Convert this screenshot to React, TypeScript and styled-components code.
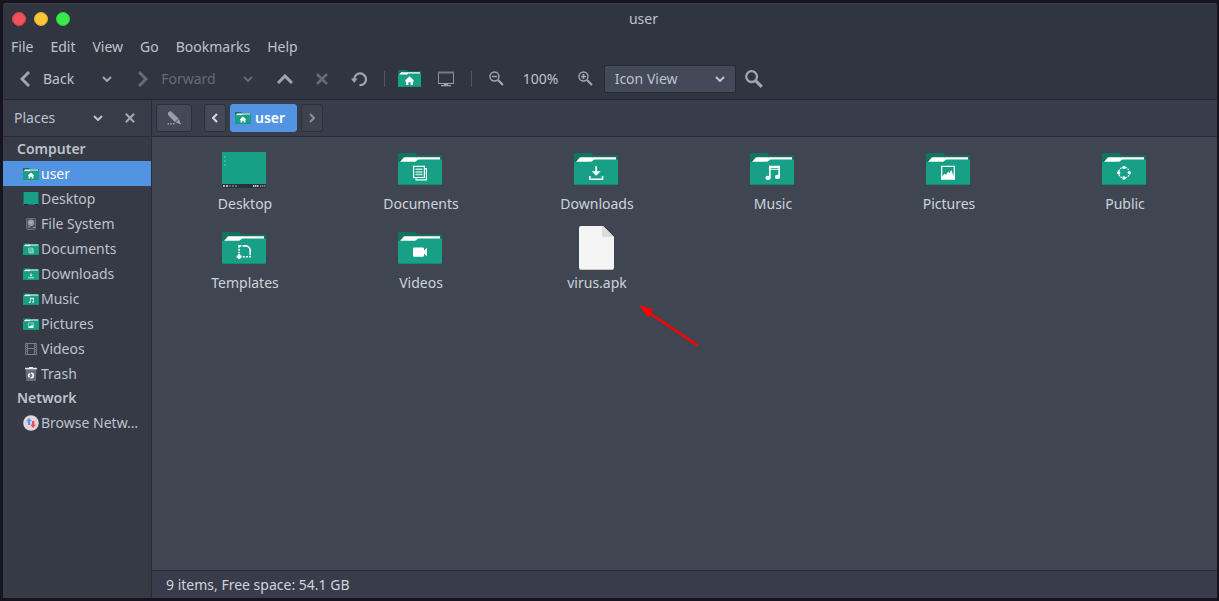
import React from 'react';
import styled, { createGlobalStyle, css } from 'styled-components';

const GlobalStyle = createGlobalStyle`
  *, *::before, *::after { box-sizing: border-box; }
  html, body, #root { height: 100%; }
  body {
    margin: 0;
    background: #17141f;
    color: #bcc3ce;
    font: 14px/20px "Noto Sans", "Open Sans", sans-serif;
  }
  button, select { font: inherit; color: inherit; }
  svg { display: block; flex: none; }
`;

const Desktop = styled.div`
  min-height: 100%;
  display: flex;
  padding: 3px 2px 3px 3px;
`;

const Window = styled.div`
  flex: 1;
  min-width: 0;
  display: flex;
  flex-direction: column;
  border-radius: 3px 3px 0 0;
  overflow: hidden;
  background: #404651;
`;

const Header = styled.header`
  background: #31353f;
  border-bottom: 1px solid #23262e;
  border-top: 1px solid #3a3e49;
`;

const TitleBar = styled.div`
  display: flex;
  align-items: center;
  height: 29px;
  padding-left: 9px;
`;

const WindowButtons = styled.div`
  display: flex;
  gap: 8px;
`;

const WindowButton = styled.button<{ $color: string; $edge: string }>`
  width: 14px;
  height: 14px;
  padding: 0;
  border: 1px solid ${(p) => p.$edge};
  border-radius: 50%;
  background: ${(p) => p.$color};
`;

const Title = styled.h1`
  flex: 1;
  margin: 0;
  font-size: 14px;
  font-weight: 400;
  text-align: center;
`;

const MenuBar = styled.nav`
  display: flex;
  gap: 1px;
  height: 28px;
`;

const MenuButton = styled.button`
  padding: 0 8px;
  border: 0;
  background: none;
`;

const ToolBar = styled.div`
  display: flex;
  align-items: center;
  height: 38px;
  padding: 0 4px 3px;
`;

const ToolButton = styled.button<{ $labelled?: boolean }>`
  display: flex;
  align-items: center;
  justify-content: center;
  gap: 13px;
  height: 28px;
  border: 0;
  background: none;
  color: #a0a5b0;
  ${(p) => (p.$labelled ? css`padding: 0 14px 0 13px;` : css`width: 37px; padding: 0;`)}
  span { color: #bcc3ce; }
  &:disabled, &:disabled span { color: #666b77; }
`;

const Separator = styled.div`
  width: 1px;
  height: 16px;
  margin: 0 6px;
  background: #4f545f;
`;

const ZoomLevel = styled.output`
  width: 52px;
  text-align: center;
`;

const SelectBox = styled.div`
  position: relative;
  svg {
    position: absolute;
    right: 11px;
    top: 11px;
    pointer-events: none;
  }
`;

const Select = styled.select`
  display: block;
  appearance: none;
  width: 132px;
  height: 28px;
  padding: 0 28px 0 10px;
  border: 1px solid #262a33;
  border-radius: 2px;
  background: #434959;
`;

const Body = styled.div`
  flex: 1;
  display: flex;
`;

const Sidebar = styled.aside`
  width: 149px;
  flex: none;
  background: #363a45;
  border-right: 1px solid #2a2d38;
`;

const SidebarHeader = styled.div`
  display: flex;
  align-items: center;
  height: 37px;
  padding: 0 10px 0 11px;
  border-bottom: 1px solid #2a2d38;
  background: #383b48;
`;

const PlacesButton = styled.button`
  flex: 1;
  display: flex;
  align-items: center;
  justify-content: space-between;
  padding: 0 16px 0 0;
  border: 0;
  background: none;
`;

const IconButton = styled.button`
  display: grid;
  place-items: center;
  width: 22px;
  height: 22px;
  padding: 0;
  border: 0;
  background: none;
  color: #a0a5b0;
`;

const GroupTitle = styled.h2`
  height: 24px;
  margin: 0;
  padding-left: 14px;
  font-size: 14px;
  line-height: 24px;
  font-weight: 600;
`;

const PlaceList = styled.ul`
  margin: 0;
  padding: 0;
  list-style: none;
`;

const Place = styled.a<{ $active?: boolean }>`
  display: flex;
  align-items: center;
  gap: 2px;
  height: 25px;
  padding: 0 8px 0 20px;
  color: ${(p) => (p.$active ? '#ffffff' : '#bcc3ce')};
  background: ${(p) => (p.$active ? '#5294e2' : 'transparent')};
  text-decoration: none;
  span {
    overflow: hidden;
    text-overflow: ellipsis;
    white-space: nowrap;
  }
`;

const Main = styled.main`
  flex: 1;
  min-width: 0;
  display: flex;
  flex-direction: column;
`;

const PathBar = styled.div`
  display: flex;
  align-items: center;
  gap: 4px;
  height: 37px;
  padding: 0 4px;
  border-bottom: 1px solid #2a2d38;
  background: #393c4a;
`;

const PathButton = styled.button<{ $active?: boolean; $wide?: boolean }>`
  display: flex;
  align-items: center;
  justify-content: center;
  gap: 4px;
  height: 28px;
  min-width: ${(p) => (p.$wide ? 36 : 22)}px;
  margin-right: ${(p) => (p.$wide ? 8 : 0)}px;
  padding: 0 ${(p) => (p.$active ? 11 : 0)}px 0 ${(p) => (p.$active ? 4 : 0)}px;
  border: 1px solid ${(p) => (p.$active ? '#5294e2' : '#2c303b')};
  border-radius: 3px;
  background: ${(p) => (p.$active ? '#5294e2' : '#444857')};
  color: ${(p) => (p.$active ? '#ffffff' : '#d3dae3')};
  font-weight: ${(p) => (p.$active ? 600 : 400)};
  &:disabled { background: #3e424f; color: #8a8f9b; }
`;

const FileGrid = styled.ul`
  flex: 1;
  display: grid;
  grid-template-columns: repeat(auto-fill, minmax(160px, 1fr));
  grid-auto-rows: 79px;
  align-content: start;
  margin: 0;
  padding: 8px 5px 0 4px;
  list-style: none;
`;

const FileItem = styled.li`
  position: relative;
  display: flex;
  flex-direction: column;
  align-items: center;
  gap: 1px;
  text-align: center;
`;

const FileIcon = styled.div`
  display: grid;
  place-items: center;
  height: 48px;
`;

const FileName = styled.span`
  padding-left: 2px;
  color: #cdd3dc;
`;

const Pointer = styled.svg`
  position: absolute;
  left: calc(50% + 43px);
  top: 81px;
`;

const StatusBar = styled.footer`
  height: 28px;
  padding: 0 14px;
  border-top: 1px solid #2a2d38;
  background: #393c4a;
  line-height: 27px;
  color: #cdd3dc;
`;

type Dir = 'left' | 'right' | 'up' | 'down';
const chevrons: Record<Dir, string> = {
  left: 'M9 1 2 8l7 7',
  right: 'M1 1l7 7-7 7',
  up: 'M1 9l7-7 7 7',
  down: 'M1 1l4 4 4-4',
};

const Chevron = ({ dir }: { dir: Dir }) => {
  const w = dir === 'up' ? 16 : 10;
  const h = dir === 'up' ? 10 : dir === 'down' ? 6 : 16;
  return (
    <svg width={w} height={h} viewBox={`0 0 ${w} ${h}`} fill="none" stroke="currentColor" strokeWidth={dir === 'down' ? 2 : 3} aria-hidden>
      <path d={chevrons[dir]} />
    </svg>
  );
};

const SmallChevron = ({ flip }: { flip?: boolean }) => (
  <svg width="6" height="10" viewBox="0 0 6 10" fill="none" stroke="currentColor" strokeWidth="2" aria-hidden>
    <path d={flip ? 'M1 1l4 4-4 4' : 'M5 1 1 5l4 4'} />
  </svg>
);

const Cross = ({ size }: { size: number }) => (
  <svg width={size} height={size} viewBox="0 0 12 12" fill="none" stroke="currentColor" strokeWidth="2.6" aria-hidden>
    <path d="M1 1l10 10M11 1 1 11" />
  </svg>
);

const Reload = () => (
  <svg width="16" height="16" viewBox="0 0 16 16" aria-hidden>
    <path d="M8.5 14.2h.8A5.9 5.9 0 1 0 3.2 8" fill="none" stroke="currentColor" strokeWidth="2.2" />
    <path d="M0 7.4h6.6L3.2 12z" fill="currentColor" />
  </svg>
);

const Monitor = () => (
  <svg width="16" height="16" viewBox="0 0 16 16" aria-hidden>
    <path d="M.5 1v11.5h15V1" fill="#31353f" stroke="#8795a3" />
    <path d="M0 .5h16v2H0z" fill="#747b87" />
    <path d="M0 12h16v1H0zM6 13h4v1H6zM3 14h10v1.2H3z" fill="#98a5b1" />
  </svg>
);

const Magnifier = ({ sign }: { sign?: 'plus' | 'minus' }) => {
  const size = sign ? 15 : 18;
  return (
    <svg width={size} height={size} viewBox="0 0 15 15" fill="none" stroke="currentColor" aria-hidden>
      <circle cx="5.5" cy="5.5" r="4.5" strokeWidth={sign ? 1.4 : 1.9} />
      <path d="M9 9l5 5" strokeWidth={sign ? 2.2 : 2.6} />
      {sign && <path d="M3 5.5h5" strokeWidth="1.6" />}
      {sign === 'plus' && <path d="M5.5 3v5" strokeWidth="1.6" />}
    </svg>
  );
};

const Pencil = () => (
  <svg width="14" height="14" viewBox="0 0 14 14" fill="#989ca6" aria-hidden>
    <path d="M1 1.4 3.6 0l8 7.4L8 11.2 1 4zM8.7 11.5 12 8.1l2 5.5z" />
    <path d="M.5 12h1.6v1.4H.5zM3.3 12h1.6v1.4H3.3zM6.1 12h1.6v1.4H6.1z" />
  </svg>
);

type Emblem = 'home' | 'documents' | 'downloads' | 'music' | 'pictures' | 'public' | 'templates' | 'videos';

const emblems: Record<Emblem, React.ReactNode> = {
  home: <path d="M7-1 15 6.500V9h-1.500v6.500H9.100v-5H4.900v5H.5V9H-1V6.500z" fill="#fff" />,
  documents: (
    <g fill="none" stroke="#fff">
      <path d="M.6.6h10.8v11.2H.6z" strokeWidth="1.2" />
      <path d="M11.6 2.8h1.8v11.4H3v-2" strokeWidth="1.2" />
      <path d="M2.5 3.5h7M2.5 6.2h7M2.5 8.9h7" strokeOpacity=".75" strokeWidth="1.5" />
    </g>
  ),
  downloads: (
    <path d="M6.3.5h1.8v5h3.6L7.2 10 2.7 5.5h3.6zM.2 10.3h1.5v2.4h11.1v-2.4h1.5v4H.2z" fill="#fff" />
  ),
  music: (
    <g fill="#fff">
      <path d="M4 0h11v11h-1.7V4H5.7v8H4z" />
      <ellipse cx="3" cy="12.2" rx="2.6" ry="2.1" />
      <ellipse cx="12.5" cy="11.2" rx="2.6" ry="2.1" />
      <path d="M5.7 2.2h7.6v.9H5.7z" fill="#17a085" />
    </g>
  ),
  pictures: (
    <path fillRule="evenodd" d="M0 0h14v14H0zM1.3 1.3v9.8l2.2-3.2L5 9l2.2-3.1L8.2 7.5l2.1-3.3 2.4 6V1.3z" fill="#fff" />
  ),
  public: (
    <g fill="#fff">
      <circle cx="7" cy="7" r="5.4" fill="none" stroke="#fff" strokeWidth="1.2" strokeDasharray="1.6 1" />
      <circle cx="7" cy="1.7" r="1.7" />
      <circle cx="7" cy="12.3" r="1.7" />
      <circle cx="1.7" cy="7" r="1.7" />
      <circle cx="12.3" cy="7" r="1.7" />
    </g>
  ),
  templates: (
    <g fill="none" stroke="#fff" strokeWidth="1.6">
      <path d="M5.5 1.2h3a4.7 4.7 0 0 1 4.7 4.7v4.600" />
      <path d="M2 3V1.200h2.400M2 4v2M2 7v1.800M5.900 12h2M9 12h2M12 12h1.200v-.8" />
      <path d="M2.200 9.600v4.800M-.300 12h5" strokeWidth="2.200" />
    </g>
  ),
  videos: <path d="M1 2.8h9q1 0 1 1v2L14 3v8.6L11 9v2q0 1-1 1H1q-1 0-1-1V3.8q0-1 1-1z" fill="#fff" />,
};

const Folder = ({ emblem, width = 44, height = 32 }: { emblem: Emblem; width?: number; height?: number }) => (
  <svg width={width} height={height} viewBox="0 0 44 32" preserveAspectRatio="none" aria-hidden>
    <path d="M1 0h16l2.500 2.500H43q1 0 1 1V20H0V1q0-1 1-1z" fill="#12735f" />
    <path d="M1.500 9.500 6 4.200h36v6z" fill="#fff" />
    <path d="M0 8.700h16.600q1.200 0 2-1l.7-.5q.6-.6 1.600-.6H43q1 0 1 1V31q0 1-1 1H1q-1 0-1-1z" fill="#17a085" />
    <path d="M.5 31.200h43q-.2.8-1 .8h-41q-.8 0-1-.8z" fill="#12866f" />
    <g transform="translate(15 12.7)">{emblems[emblem]}</g>
  </svg>
);

const DesktopIcon = () => (
  <svg width="44" height="38" viewBox="0 -2 44 38" aria-hidden>
    <path d="M0 0h44v32H0z" fill="#17a085" />
    <path d="M2 4h2v2H2zM2 8h2v2H2zM2 12h2v2H2z" fill="#22c3a0" />
    <path d="M0 32h44v4H0z" fill="#2b3139" />
    <path d="M1 33h2v2H1zM4 33h2v2H4z" fill="#b3b6ba" />
    <path d="M7 33h2v2H7z" fill="#b8454e" />
    <path d="M10 33h2v2h-2zM13 33h2v2h-2z" fill="#3d7f7a" />
    <path d="M31 33h1.4v2H31zM33 33h1.4v2H33zM35 33h1.4v2H35z" fill="#c3c6ca" />
    <path d="M38 33h1.4v2H38zM40 33h1.4v2H40zM42 33h1.4v2H42z" fill="#747980" />
  </svg>
);

const FilePage = () => (
  <svg width="38" height="44" viewBox="-2 0 38 44" aria-hidden>
    <path d="M2 0h22l11 11v30.5q0 2.300-2.300 2.300H2.300Q0 43.800 0 41.500V2q0-2 2-2z" fill="#f5f5f5" />
    <path d="M0 41.200q.2 1.800 2.300 1.800h30.400q2.100 0 2.300-1.800-.1 2.800-2.300 2.800H2.300Q0 44 0 41.200z" fill="#c9c5c1" />
    <path d="M24 0l11 11H24.500q-1.500 0-1.500-1.500V0z" fill="#dcdcdc" />
  </svg>
);

const SmallDesktop = () => (
  <svg width="16" height="13" viewBox="0 0 16 13" aria-hidden>
    <path d="M0 0h16v13H0z" fill="#236b61" />
    <path d="M1 0h14v12H1z" fill="#17a085" />
    <path d="M1 12h4v1H1zM12 12h3v1h-3z" fill="#20252b" />
  </svg>
);

const Drive = () => (
  <svg width="16" height="14" viewBox="0 0 16 14" aria-hidden>
    <rect x="3.5" y="1.5" width="9" height="11" rx="1" fill="#4d525e" stroke="#686d79" />
    <circle cx="8" cy="5.8" r="3.2" fill="#969ba5" />
    <circle cx="8" cy="5.8" r="1" fill="#aeb3bb" />
    <path d="M5 10l2-2 1 1-2 2z" fill="#868b95" />
    <path d="M10 10h2v1h-2z" fill="#9297a1" />
  </svg>
);

const Film = () => (
  <svg width="16" height="12" viewBox="0 0 16 12" aria-hidden>
    <path d="M2.5.5h11v11h-11zM4.5.5v11M11.5.5v11M4.5 5.5h7" fill="none" stroke="#7b7f89" />
    <path d="M2 2.5h2M2 4.5h2M2 6.5h2M2 8.5h2M12 2.5h2M12 4.5h2M12 6.5h2M12 8.5h2" stroke="#676b75" />
  </svg>
);

const TrashCan = () => (
  <svg width="16" height="14" viewBox="0 0 16 14" aria-hidden>
    <path d="M2.5 2h11l-.8 12H3.3z" fill="#686e7a" />
    <path d="M2 .8h4V0h4v.8h4v1.400H2z" fill="#e9eaec" />
    <circle cx="8" cy="8.5" r="2.3" fill="none" stroke="#fff" strokeWidth="1.5" strokeDasharray="3.7 1.1" />
  </svg>
);

const NetworkIcon = () => (
  <svg width="16" height="16" viewBox="0 0 16 16" aria-hidden>
    <circle cx="8" cy="8" r="7.8" fill="#e2d4da" />
    <path d="M6 3l3 3.200H7.200V10H4.800V6.200H3z" fill="#4f9de8" />
    <path d="M10 13l3-3.200h-1.600V6H9v3.800H7.200z" fill="#ee4f5a" />
  </svg>
);

const places: { name: string; icon: React.ReactNode; active?: boolean }[] = [
  { name: 'user', icon: <Folder emblem="home" width={16} height={12} />, active: true },
  { name: 'Desktop', icon: <SmallDesktop /> },
  { name: 'File System', icon: <Drive /> },
  { name: 'Documents', icon: <Folder emblem="documents" width={16} height={12} /> },
  { name: 'Downloads', icon: <Folder emblem="downloads" width={16} height={12} /> },
  { name: 'Music', icon: <Folder emblem="music" width={16} height={12} /> },
  { name: 'Pictures', icon: <Folder emblem="pictures" width={16} height={12} /> },
  { name: 'Videos', icon: <Film /> },
  { name: 'Trash', icon: <TrashCan /> },
];

const files: { name: string; icon: React.ReactNode; flagged?: boolean }[] = [
  { name: 'Desktop', icon: <DesktopIcon /> },
  { name: 'Documents', icon: <Folder emblem="documents" /> },
  { name: 'Downloads', icon: <Folder emblem="downloads" /> },
  { name: 'Music', icon: <Folder emblem="music" /> },
  { name: 'Pictures', icon: <Folder emblem="pictures" /> },
  { name: 'Public', icon: <Folder emblem="public" /> },
  { name: 'Templates', icon: <Folder emblem="templates" /> },
  { name: 'Videos', icon: <Folder emblem="videos" /> },
  { name: 'virus.apk', icon: <FilePage />, flagged: true },
];

const menus = ['File', 'Edit', 'View', 'Go', 'Bookmarks', 'Help'];

export default function App() {
  return (
    <>
      <GlobalStyle />
      <Desktop>
        <Window>
          <Header>
            <TitleBar>
              <WindowButtons>
                <WindowButton $color="#f25056" $edge="#d9474d" aria-label="Close window" />
                <WindowButton $color="#fac536" $edge="#dfae2f" aria-label="Minimize" />
                <WindowButton $color="#39ea49" $edge="#32cf41" aria-label="Maximize" />
              </WindowButtons>
              <Title>user</Title>
            </TitleBar>
            <MenuBar>
              {menus.map((m) => (
                <MenuButton key={m}>{m}</MenuButton>
              ))}
            </MenuBar>
            <ToolBar>
              <ToolButton $labelled><Chevron dir="left" /><span>Back</span></ToolButton>
              <ToolButton aria-label="Back history"><Chevron dir="down" /></ToolButton>
              <ToolButton $labelled disabled><Chevron dir="right" /><span>Forward</span></ToolButton>
              <ToolButton disabled aria-label="Forward history"><Chevron dir="down" /></ToolButton>
              <ToolButton aria-label="Up"><Chevron dir="up" /></ToolButton>
              <ToolButton disabled aria-label="Stop"><Cross size={12} /></ToolButton>
              <ToolButton aria-label="Reload"><Reload /></ToolButton>
              <Separator />
              <ToolButton aria-label="Home"><Folder emblem="home" width={23} height={17} /></ToolButton>
              <ToolButton aria-label="Computer"><Monitor /></ToolButton>
              <Separator />
              <ToolButton aria-label="Zoom out"><Magnifier sign="minus" /></ToolButton>
              <ZoomLevel>100%</ZoomLevel>
              <ToolButton aria-label="Zoom in"><Magnifier sign="plus" /></ToolButton>
              <SelectBox>
                <Select aria-label="View mode" defaultValue="icon">
                  <option value="icon">Icon View</option>
                  <option value="list">List View</option>
                  <option value="compact">Compact View</option>
                </Select>
                <Chevron dir="down" />
              </SelectBox>
              <ToolButton aria-label="Search"><Magnifier /></ToolButton>
            </ToolBar>
          </Header>
          <Body>
            <Sidebar>
              <SidebarHeader>
                <PlacesButton>Places<Chevron dir="down" /></PlacesButton>
                <IconButton aria-label="Close side pane"><Cross size={10} /></IconButton>
              </SidebarHeader>
              <GroupTitle>Computer</GroupTitle>
              <PlaceList>
                {places.map((p) => (
                  <li key={p.name}>
                    <Place href="#" $active={p.active}>{p.icon}<span>{p.name}</span></Place>
                  </li>
                ))}
              </PlaceList>
              <GroupTitle>Network</GroupTitle>
              <PlaceList>
                <li><Place href="#" title="Browse Network"><NetworkIcon /><span>Browse Netw…</span></Place></li>
              </PlaceList>
            </Sidebar>
            <Main>
              <PathBar>
                <PathButton $wide aria-label="Edit location"><Pencil /></PathButton>
                <PathButton aria-label="Previous"><SmallChevron /></PathButton>
                <PathButton $active><Folder emblem="home" width={16} height={12} />user</PathButton>
                <PathButton disabled aria-label="Next"><SmallChevron flip /></PathButton>
              </PathBar>
              <FileGrid>
                {files.map((f) => (
                  <FileItem key={f.name}>
                    <FileIcon>{f.icon}</FileIcon>
                    <FileName>{f.name}</FileName>
                    {f.flagged && (
                      <Pointer width="60" height="43" viewBox="0 0 60 43" aria-hidden>
                        <path d="M9 7l49 33" stroke="#ff0000" strokeWidth="2.6" strokeLinecap="round" />
                        <path d="M0 0l14.5 4.5-2.500 3-2.800 5z" fill="#ff0000" />
                      </Pointer>
                    )}
                  </FileItem>
                ))}
              </FileGrid>
              <StatusBar>9 items, Free space: 54.1 GB</StatusBar>
            </Main>
          </Body>
        </Window>
      </Desktop>
    </>
  );
}
